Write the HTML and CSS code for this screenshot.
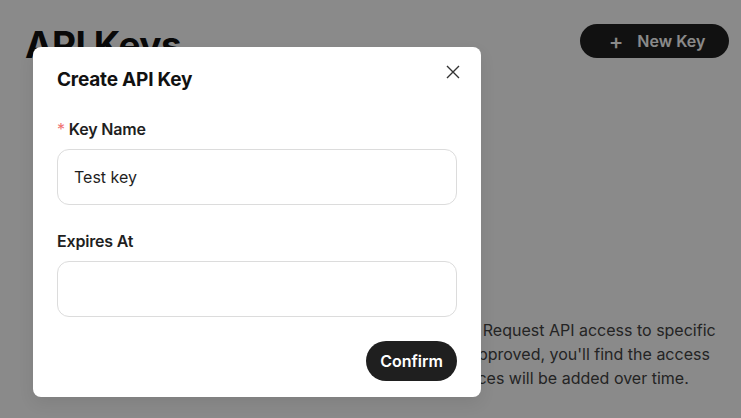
FILE: index.html
```html
<!DOCTYPE html>
<html>
<head>
<meta charset="utf-8">
<link rel="stylesheet" href="styles.css">
</head>
<body>
<div class="page">
  <header class="page-head">
    <h1 class="page-title">API Keys</h1>
    <button class="new-key"><span class="plus">+</span>New Key</button>
  </header>
  <p class="intro">Manage your keys. Request API access to specific<br>scopes and once approved, you'll find the access<br>details. Other services will be added over time.</p>
</div>
<div class="overlay"></div>
<div class="modal">
  <div class="modal-head">
    <h2 class="modal-title">Create API Key</h2>
    <svg class="close" width="14" height="14" viewBox="0 0 14 14"><path d="M1 1L13 13M13 1L1 13" stroke="#333" stroke-width="1.4" fill="none"/></svg>
  </div>
  <div class="field">
    <label class="label"><span class="req">*</span>Key Name</label>
    <div class="input">Test key</div>
  </div>
  <div class="field">
    <label class="label">Expires At</label>
    <div class="input"></div>
  </div>
  <div class="actions">
    <button class="confirm">Confirm</button>
  </div>
</div>
</body>
</html>
```

FILE: styles.css
```css
* { box-sizing: border-box; }
html, body { margin: 0; padding: 0; }
body {
  width: 741px;
  height: 418px;
  overflow: hidden;
  background: #ffffff;
  font-family: Inter, "Noto Sans", sans-serif;
  color: #1f1f1f;
  position: relative;
}
.page { padding: 24px 12px 0 25px; }
.page-head {
  display: flex;
  justify-content: space-between;
  align-items: flex-start;
}
.page-title {
  margin: 2px 0 0 0;
  font-size: 37px;
  font-weight: 700;
  line-height: 37px;
  letter-spacing: -0.5px;
  color: #111;
}
.new-key {
  background: #202020;
  color: #fff;
  border: none;
  height: 34px;
  width: 149px;
  border-radius: 17px;
  font-family: inherit;
  font-size: 16px;
  font-weight: 600;
  display: flex;
  align-items: center;
  justify-content: center;
  gap: 14px;
  padding: 0 0 0 5px;
}
.plus { font-size: 22px; font-weight: 500; line-height: 1; }
.intro {
  margin: 255px 0 0 0;
  padding-left: 310px;
  font-size: 16px;
  line-height: 24px;
  color: #444;
  white-space: nowrap;
}
.overlay {
  position: absolute;
  inset: 0;
  background: rgba(0,0,0,0.46);
}
.modal {
  position: absolute;
  left: 33px;
  top: 47px;
  width: 448px;
  height: 350px;
  background: #fff;
  border-radius: 8px;
  padding: 18px 24px 16px 24px;
  box-shadow: 0 6px 16px rgba(0,0,0,0.08);
}
.modal-head {
  display: flex;
  justify-content: space-between;
  align-items: center;
  height: 28px;
}
.modal-title {
  margin: 0;
  font-size: 19px;
  font-weight: 700;
  letter-spacing: -0.2px;
  color: #111;
}
.close { margin-right: -3px; margin-top: -14px; }
.field { margin-top: 26px; }
.label {
  display: flex;
  align-items: center;
  font-size: 16px;
  font-weight: 600;
  height: 20px;
  letter-spacing: -0.2px;
  color: #1f1f1f;
}
.req { color: #f07272; font-weight: 400; margin-right: 4px; font-size: 16px; }
.input {
  margin-top: 10px;
  height: 56px;
  border: 1px solid #dcdcdc;
  border-radius: 12px;
  padding: 0 16px;
  display: flex;
  align-items: center;
  font-size: 16px;
  color: #1f1f1f;
}
.actions {
  display: flex;
  justify-content: flex-end;
  margin-top: 24px;
}
.confirm {
  height: 40px;
  width: 91px;
  border-radius: 20px;
  border: none;
  background: #1f1f1f;
  color: #fff;
  font-family: inherit;
  font-size: 16px;
  font-weight: 600;
}
```
